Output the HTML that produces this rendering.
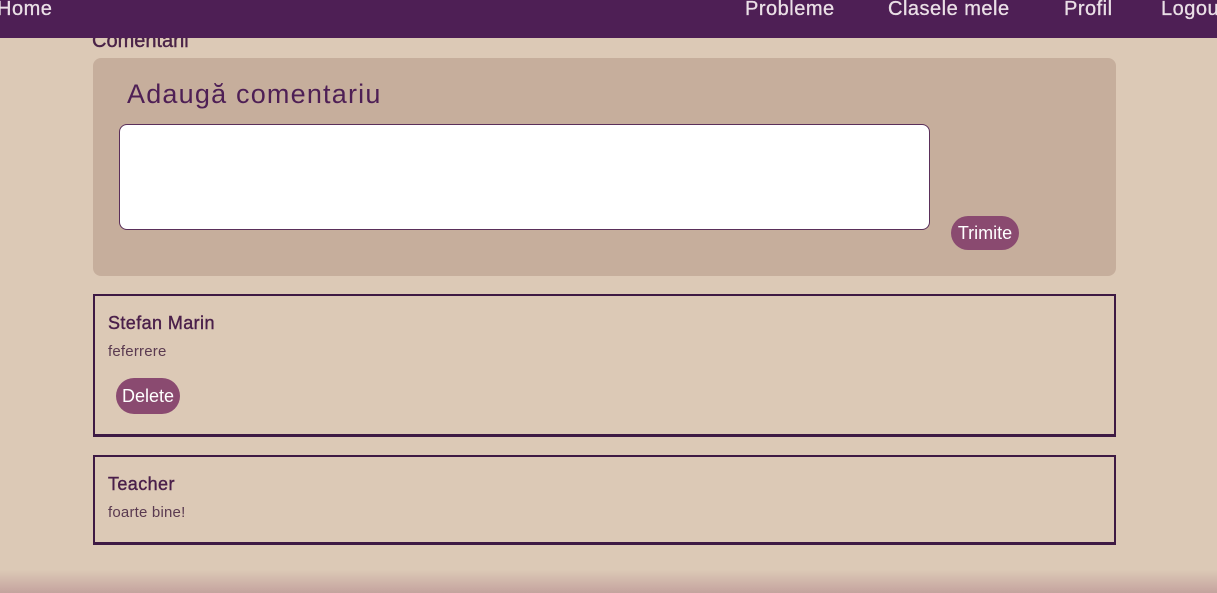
<!DOCTYPE html>
<html><head><meta charset="utf-8"><style>
*{margin:0;padding:0;box-sizing:border-box}
body{width:1217px;height:593px;overflow:hidden;background:#dcc9b6;font-family:"Liberation Sans",sans-serif;position:relative}
.nav{position:absolute;left:0;top:0;width:1217px;height:38px;background:#4e1f55;color:#eadfe6;font-size:20px;letter-spacing:0.5px;-webkit-text-stroke:0.3px #eadfe6}
.nav span{position:absolute;top:-1px;line-height:20px}
.title{position:absolute;left:92px;top:30px;font-size:20px;color:#4a2348;-webkit-text-stroke:0.4px #4a2348;clip-path:inset(8px 0 0 0)}
.panel{position:absolute;left:93px;top:58px;width:1023px;height:218px;background:#c6ae9c;border-radius:8px}
.panel h2{position:absolute;left:34px;top:21px;font-weight:normal;font-size:27px;letter-spacing:1.2px;color:#4e1f55}
.ta{position:absolute;left:26px;top:66px;width:811px;height:106px;background:#fff;border:1.5px solid #5a2f5a;border-radius:8px}
.btn{position:absolute;background:#8a4a70;color:#fff;font-size:18px;border-radius:18px;text-align:center}
.card{position:absolute;left:93px;width:1023px;border:2px solid #3e1a44;border-bottom-width:3px}
.card b{position:absolute;left:13px;font-size:18px;font-weight:normal;letter-spacing:0.4px;color:#4a1f4a;-webkit-text-stroke:0.4px #4a1f4a}
.card p{position:absolute;left:13px;font-size:15px;letter-spacing:0.2px;color:#5a3a50}
.bot{position:absolute;left:0;top:570px;width:1217px;height:23px;background:linear-gradient(#dcc9b6,#c4a39e)}
</style></head><body>
<div class="nav"><span style="left:-3px">Home</span><span style="left:745px">Probleme</span><span style="left:888px">Clasele mele</span><span style="left:1064px">Profil</span><span style="left:1161px">Logout</span></div>
<div class="title">Comentarii</div>
<div class="panel"><h2>Adaugă comentariu</h2><div class="ta"></div>
<div class="btn" style="left:858px;top:158px;width:68px;height:34px;line-height:34px">Trimite</div></div>
<div class="card" style="top:294px;height:143px"><b style="top:17px">Stefan Marin</b><p style="top:47px">feferrere</p>
<div class="btn" style="left:21px;top:82px;width:64px;height:36px;line-height:36px">Delete</div></div>
<div class="card" style="top:455px;height:90px"><b style="top:17px">Teacher</b><p style="top:47px">foarte bine!</p></div>
<div class="bot"></div>
</body></html>
